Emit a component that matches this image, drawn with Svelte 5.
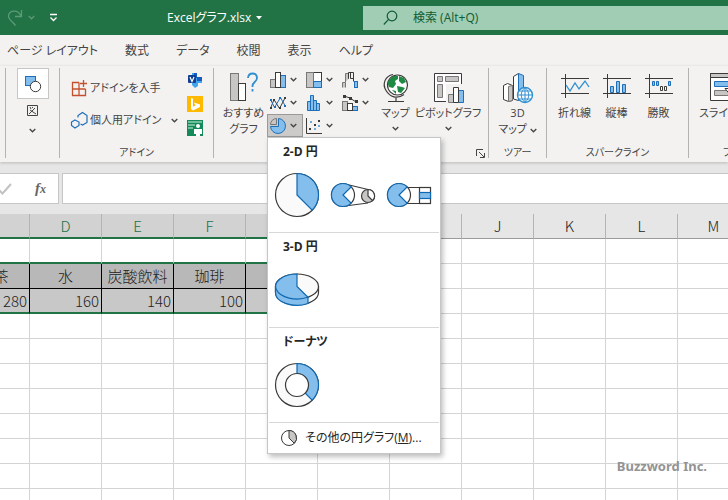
<script>
    const tabs = ["ページ レイアウト", "数式", "データ", "校閲", "表示", "ヘルプ"];
    const columns = "CDEFGHIJKLMNOPQRSTUVWXYZ".split("");
    const drinks = { C: ["お茶", 280], D: ["水", 160], E: ["炭酸飲料", 140], F: ["珈琲", 100], G: ["", ""] };
    const emptyRows = Array.from({ length: 40 }, (_, i) => i + 4);

    const smallCharts = [
        { kind: "column", label: "縦棒グラフ" },
        { kind: "tree", label: "階層構造グラフ" },
        { kind: "waterfall", label: "ウォーターフォール" },
        { kind: "line", label: "折れ線グラフ" },
        { kind: "histogram", label: "統計グラフ" },
        { kind: "combo", label: "複合グラフ" },
        { kind: "pie", label: "円グラフ" },
        { kind: "scatter", label: "散布図" }
    ];

    const sections = [
        { title: "2-D 円", items: ["pie2d", "pieOfPie", "barOfPie"] },
        { title: "3-D 円", items: ["pie3d"] },
        { title: "ドーナツ", items: ["donut"] }
    ];

    const sparklines = [
        { kind: "line", label: "折れ線" },
        { kind: "column", label: "縦棒" },
        { kind: "winloss", label: "勝敗" }
    ];

    let formula = $state("");
    let menuOpen = $state(true);
</script>

{#snippet chevron()}
    <svg class="chevron" width="7" height="5" viewBox="0 0 7 5"><path d="M.7 1 3.5 3.8 6.3 1" fill="none" stroke="currentColor" stroke-width="1.3" /></svg>
{/snippet}

{#snippet chartIcon(kind)}
    <svg width="18" height="18" viewBox="0 0 18 18" fill="none" stroke="#3b3a39">
        {#if kind === "column"}
            <rect x="1.5" y="8.5" width="5" height="8" fill="#c8c6c4" stroke="#797775" />
            <rect x="11.5" y="4.5" width="5" height="12" fill="#83beec" stroke="#1e6fb8" />
            <rect x="6.5" y="1.5" width="5" height="15" fill="#fff" />
        {:else if kind === "tree"}
            <rect x="1.5" y="1.5" width="15" height="15" fill="#fff" />
            <rect x="1.5" y="1.5" width="7" height="15" fill="#c8c6c4" stroke="#797775" />
            <rect x="8.5" y="10.5" width="8" height="6" fill="#83beec" stroke="#1e6fb8" />
        {:else if kind === "waterfall"}
            <path d="M1.5 16.500v-5h3v5M4.500 11V2.500h3V8" fill="#c8c6c4" stroke="#797775" />
            <path d="M7.500 7.500v-6h5v9M9.500 1.500v6h3" />
            <rect x="13.500" y="10.500" width="3" height="6" fill="#83beec" stroke="#1e6fb8" />
        {:else if kind === "line"}
            <path d="M1.500 14.500 5 5.500l5.500 9L16 4" />
            <path d="M1.500 5.500l4 8 6-10 5 9" stroke="#1e6fb8" />
            <path d="M1 13h2v2H1zM4 5h2v2H4zM10 13h2v2h-2zM15 3h2v2h-2z" fill="#3b3a39" stroke="none" />
            <path d="M1 5h2v2H1zM5 12h2v2H5zM10 3h2v2h-2zM15 11h2v2h-2z" fill="#1e6fb8" stroke="none" />
        {:else if kind === "histogram"}
            <path d="M2.5 16.5v-9h3v-6h3v5h3v3h3v7z" fill="#83beec" stroke="#1e6fb8" />
            <path d="M5.5 7v9M8.5 6v10M11.5 9v7" stroke="#1e6fb8" />
        {:else if kind === "combo"}
            <rect x="1.5" y="7.5" width="5" height="9" fill="#c8c6c4" stroke="#797775" />
            <rect x="11.5" y="12.5" width="5" height="4" fill="#83beec" stroke="#1e6fb8" />
            <rect x="6.5" y="9.5" width="5" height="7" fill="#fff" />
            <path d="M3 2l6 2 6 4" />
            <path d="M2 1h3v3H2zM8 3h3v3H8zM14 6h3v3h-3z" fill="#3b3a39" stroke="none" />
        {:else if kind === "pie"}
            <path d="M9.500 1.500v8h-8a7.500 7.500 0 1 0 8-8z" fill="#83beec" stroke="#1e6fb8" />
            <path d="M7.500 1.500v6h-6a6 6 0 0 1 6-6z" fill="#c8c6c4" stroke="#797775" />
        {:else}
            <path d="M1.5 1v15.5H17" />
            <path d="M4 11h2v2H4zM9 7h2v2H9zM13 3h2v2h-2z" fill="#3b3a39" stroke="none" />
            <path d="M5 4h2v2H5zM9 11h2v2H9zM13 8h2v2h-2z" fill="#6aaede" stroke="none" />
        {/if}
    </svg>
{/snippet}

{#snippet pieIcon(kind)}
    <svg width="46" height="46" viewBox="0 0 46 46" fill="none" stroke="#3b3a39" stroke-width="1.2">
        {#if kind === "pie2d"}
            <circle cx="23" cy="23" r="21.5" fill="#fafafa" />
            <path d="M23 1.500v21.500l15.200 15.200A21.500 21.500 0 0 0 23 1.500z" fill="#83beec" stroke="#1068b0" />
        {:else if kind === "pieOfPie"}
            <path d="M15 12l23 5.500M15 34l23-3" />
            <circle cx="13" cy="23" r="11.500" fill="#fff" />
            <path d="M21.100 14.900a11.500 11.500 0 1 0 0 16.200L13 23z" fill="#83beec" stroke="#1068b0" />
            <circle cx="38" cy="24" r="6.500" fill="#c8c6c4" />
            <path d="M38 24v-6.500A6.500 6.500 0 0 1 42.600 28.600z" fill="#fff" />
        {:else if kind === "barOfPie"}
            <path d="M18 15.500h16.500M18 31.500h16.500" />
            <circle cx="13" cy="23" r="11.500" fill="#fff" />
            <path d="M21.100 14.900a11.500 11.500 0 1 0 0 16.200L13 23z" fill="#83beec" stroke="#1068b0" />
            <rect x="33.500" y="15.500" width="11" height="16" fill="#fff" />
            <rect x="33.500" y="20.500" width="11" height="6" fill="#83beec" stroke="#1068b0" />
        {:else if kind === "pie3d"}
            <path d="M1.500 19.500v6a21.500 12.500 0 0 0 43 0v-6z" fill="#fff" />
            <ellipse cx="23" cy="19.500" rx="21.500" ry="12.500" fill="#fafafa" />
            <path d="M1.500 19.500v6A21.500 12.500 0 0 0 34 36.500v-6z" fill="#83beec" stroke="#1068b0" />
            <path d="M23 7A21.500 12.500 0 1 0 34 30.300L23 19.500z" fill="#83beec" stroke="#1068b0" />
        {:else}
            <circle cx="23" cy="23" r="21.500" fill="#fafafa" />
            <path d="M23 1.500A21.500 21.500 0 0 1 38.200 38.200L31 31a11.500 11.500 0 0 0-8-19.500z" fill="#83beec" stroke="#1068b0" />
            <circle cx="23" cy="23" r="11.500" fill="#fff" />
        {/if}
    </svg>
{/snippet}

<div class="app">
    <header class="titlebar">
        <div class="quick">
            <svg width="16" height="18" viewBox="0 0 16 18" fill="none" stroke="#5c9a78" stroke-width="1.3"><path d="M14.500 1v6.500H8M14 7C11 0 1 1 1.500 7.500 2 11 6 13 8.500 16.500" /></svg>
            <span class="faded">{@render chevron()}</span>
            <svg class="custom" width="9" height="9" viewBox="0 0 9 9" fill="none" stroke="#fff" stroke-width="1.300"><path d="M1 1.500h7M1.500 4.500l3 3 3-3" /></svg>
        </div>
        <button class="doc">Excelグラフ.xlsx <svg width="6" height="4" viewBox="0 0 6 4"><path d="M0 0h6L3 3.500z" fill="#fff" /></svg></button>
        <label class="search">
            <svg width="15" height="16" viewBox="0 0 15 16" fill="none" stroke="#0e5c33" stroke-width="1.200"><circle cx="9" cy="6" r="4.800" /><path d="M5.600 9.400.8 14.500" /></svg>
            <input type="search" placeholder="検索 (Alt+Q)" aria-label="検索" />
        </label>
    </header>

    <nav class="tabs">
        {#each tabs as tab}
            <button>{tab}</button>
        {/each}
    </nav>

    <section class="ribbon">
        <div class="group edge"></div>

        <div class="group shapes">
            <button class="shape-button" aria-label="図形">
                <svg width="18" height="18" viewBox="0 0 18 18"><rect x="1.500" y="1.500" width="10" height="9" fill="#83beec" stroke="#1e6fb8" /><circle cx="11.500" cy="11.500" r="5.200" fill="#fff" stroke="#3b3a39" /></svg>
            </button>
            <button class="figure" aria-label="図">
                <svg width="11" height="11" viewBox="0 0 11 11" fill="none" stroke="#444"><path d="M.5.500h10v10H.500zM2 9l6-6M3 5l6 4M3 2l1 2M5 2l1 1" /></svg>
                {@render chevron()}
            </button>
        </div>

        <div class="group addins">
            <div class="addin-body">
                <div class="addin-list">
                    <button>
                        <svg width="18" height="18" viewBox="0 0 18 18" fill="none" stroke="#c4512d" stroke-width="1.300"><path d="M9 3.500H2.500v13h13V10M2.500 10h13M9 3.500v13M13.500 1v7M10 4.500h7" /></svg>
                        アドインを入手
                    </button>
                    <button>
                        <svg width="18" height="18" viewBox="0 0 18 18" fill="none" stroke="#1e6fb8" stroke-width="1.200"><path d="M8 6.500V4.500l4.500-3L17 4.500v7l-4.500 2.500-2-1" /><path d="M5 9l4 2v3.500L5 17l-3.500-2.500V11z" /></svg>
                        <span>個人用アドイン</span>
                        {@render chevron()}
                    </button>
                </div>
                <div class="services">
                    <button aria-label="Visio">
                        <svg width="16" height="16" viewBox="0 0 16 16"><path d="M5 1h5v4h5v6h-4v3l-3 2-3-3z" fill="#41a5ee" /><path d="M7 1h3v5H7zM10 5h5v4h-5z" fill="#185abd" /><rect x="1" y="3" width="8" height="8" rx="1" fill="#103f91" /><path d="M3 5l2 4.500L7 5" fill="none" stroke="#fff" stroke-width="1.200" /></svg>
                    </button>
                    <button aria-label="Bing">
                        <svg width="16" height="16" viewBox="0 0 16 16"><path d="M0 0h16v16H0z" fill="#ffb900" /><path d="M4 2l2 .8v8L8.500 9.500 7 6.500l6 2v2.500L6 14.500 4 13z" fill="#fff" /></svg>
                    </button>
                    <button aria-label="People Graph">
                        <svg width="16" height="16" viewBox="0 0 16 16"><path d="M0 0h16v16H0z" fill="#148a5a" /><path d="M1 2h14M1 5h7M1 8h5" stroke="#8fd0b2" stroke-width="1.400" /><circle cx="11" cy="6" r="2" fill="#fff" /><path d="M7 9h8v5h-2v2H9v-2H7z" fill="#fff" /></svg>
                    </button>
                </div>
            </div>
            <div class="group-name">アドイン</div>
        </div>

        <div class="group charts">
            <button class="large recommended">
                <svg width="32" height="32" viewBox="0 0 32 32" fill="none" stroke="#3b3a39"><rect x="2.500" y="1.500" width="8" height="27" fill="#c8c6c4" stroke="#797775" /><rect x="10.500" y="11.500" width="7" height="17" fill="#fff" /><path d="M20 6c.5-6 9-6 9 0 0 4-4.500 4-4.500 8v1M24.500 17v2.500" stroke="#2f8fd0" stroke-width="1.800" /></svg>
                <span>おすすめ<br />グラフ</span>
            </button>
            <div class="small-charts">
                {#each smallCharts as chart}
                    {#if chart.kind === "pie"}
                        <div class="anchor">
                            <button class="small open" aria-label={chart.label} aria-expanded={menuOpen} onclick={() => (menuOpen = !menuOpen)}>
                                {@render chartIcon(chart.kind)}{@render chevron()}
                            </button>
                            {#if menuOpen}
                                <div class="menu">
                                    {#each sections as section}
                                        <div class="section">
                                            <h2>{section.title}</h2>
                                            <div class="gallery">
                                                {#each section.items as item}
                                                    <button aria-label={item}>{@render pieIcon(item)}</button>
                                                {/each}
                                            </div>
                                        </div>
                                    {/each}
                                    <button class="more">
                                        <svg width="18" height="18" viewBox="0 0 18 18" fill="#fff" stroke="#3b3a39"><circle cx="9" cy="9" r="7.500" /><path d="M9 1.500V9l5.300 5.300A7.500 7.500 0 0 0 9 1.500z" fill="#c8c6c4" /></svg>
                                        <span>その他の円グラフ(<u>M</u>)...</span>
                                    </button>
                                </div>
                            {/if}
                        </div>
                    {:else}
                        <button class="small" aria-label={chart.label}>
                            {@render chartIcon(chart.kind)}{@render chevron()}
                        </button>
                    {/if}
                {/each}
            </div>
            <button class="large map">
                <svg width="32" height="32" viewBox="0 0 32 32" fill="none" stroke="#3b3a39" stroke-width="1.200"><path d="M13 2.500C5 4 2 12 6 18.500s11 9 18 4M16 26v3M8 29.500h16" /><circle cx="17.500" cy="13" r="10" fill="#fff" /><path d="M9 8l4-4 5 0 0 3-3 2 1 3-3 4-4-1-1.500-4zM19 4l5 2 2 4-4 2-3-3zM17 14l5 1 3 1-4 5-3-1zM12 18l4 1v3z" fill="#1f8a43" stroke="none" /></svg>
                <span>マップ</span>
                {@render chevron()}
            </button>
            <button class="large pivot">
                <svg width="32" height="32" viewBox="0 0 32 32" fill="none" stroke="#3b3a39"><path d="M2.500 1.500h27v28h-27z" fill="#fff" /><path d="M5.500 4.500h5v5h-5zM13.500 4.500h13v5h-13zM5.500 12.500h5v13h-5z" fill="#c8c6c4" stroke="#797775" /><path d="M14 12h18v19H14z" fill="#f3f2f1" stroke="none" /><path d="M16.500 22.500h5v8h-5z" fill="#c8c6c4" stroke="#797775" /><path d="M26.500 18.500h5v12h-5z" fill="#83beec" stroke="#1e6fb8" /><path d="M21.500 15.500h5v15h-5z" fill="#fff" /></svg>
                <span>ピボットグラフ</span>
                {@render chevron()}
            </button>
            <button class="launcher" aria-label="グラフのオプション">
                <svg width="9" height="9" viewBox="0 0 9 9" fill="none" stroke="#444"><path d="M.5 7V.5H7M3 3l5 5M8.500 4v4.500H4" /></svg>
            </button>
        </div>

        <div class="group tour">
            <button class="large">
                <svg width="32" height="32" viewBox="0 0 32 32" fill="none" stroke="#3b3a39"><path d="M1.500 13.500l4-2 5 2v15l-4 1-5-2z" fill="#fff" /><path d="M6.500 14.500l4-1v15l-4 1z" fill="#c8c6c4" stroke="#797775" /><path d="M11.500 4.500l5-3v27l-5-1.500z" fill="#fff" /><path d="M16.500 1.500l5 2v25h-5z" fill="#83beec" stroke="#1e6fb8" /><circle cx="23" cy="23" r="7.500" fill="#fff" stroke="#2f8fd0" stroke-width="1.400" /><path d="M15.500 23h15M17 19h12M17 27h12M23 15.500v15M23 15.500c-5 5-5 10 0 15 5-5 5-10 0-15" stroke="#2f8fd0" /></svg>
                <span>3D<br />マップ {@render chevron()}</span>
            </button>
            <div class="group-name">ツアー</div>
        </div>

        <div class="group sparklines">
            <div class="spark-list">
                {#each sparklines as spark}
                    <button class="large">
                        <svg width="32" height="32" viewBox="0 0 32 32" fill="none" stroke="#3b3a39">
                            <path d="M2 6.500h28M2 21.500h28M6.500 2v24" />
                            {#if spark.kind === "line"}
                                <path d="M7 13l4 6 5-8 4 6 6-8 4 6" stroke="#2f8fd0" stroke-width="1.300" />
                            {:else if spark.kind === "column"}
                                <path d="M9.500 14.500h3v6h-3zM15.500 9.500h3v11h-3zM21.500 12.500h3v8h-3z" fill="#83beec" stroke="#1e6fb8" />
                            {:else}
                                <path d="M9.500 9.500h2v4h-2zM13.500 9.500h2v4h-2zM25.500 9.500h2v4h-2z" fill="#83beec" stroke="#1e6fb8" />
                                <path d="M17.500 14.500h2v4h-2zM21.500 14.500h2v4h-2z" fill="#fff" />
                            {/if}
                        </svg>
                        <span>{spark.label}</span>
                    </button>
                {/each}
            </div>
            <div class="group-name">スパークライン</div>
        </div>

        <div class="group filters">
            <button class="large">
                <svg width="32" height="32" viewBox="0 0 32 32" fill="none" stroke="#3b3a39"><path d="M2.500 1.500h27v27h-27z" fill="#fff" /><path d="M2.500 1.500h27v4h-27z" fill="#c8c6c4" /><path d="M6.500 9.500H27v5H6.500z" fill="#83beec" stroke="#1e6fb8" /><path d="M6.500 18.500H27v5H6.500z" fill="#c8c6c4" stroke="#797775" /><path d="M17 16.500h14l-5 6v7h-4v-7z" fill="#fff" /></svg>
                <span>スライサー</span>
            </button>
            <div class="group-name">フィルター</div>
        </div>
    </section>

    <div class="formula">
        <div class="formula-tools">
            <svg width="14" height="12" viewBox="0 0 14 12" fill="none" stroke="#c2c2c2" stroke-width="2"><path d="M1 7l3.500 3.500L13 1" /></svg>
            <button class="fx"><i>f</i><small>x</small></button>
        </div>
        <input class="formula-text" aria-label="数式バー" bind:value={formula} />
    </div>

    <main class="sheet">
        <table>
            <thead>
                <tr>
                    {#each columns as column}
                        <th class:selected={column in drinks}>{column}</th>
                    {/each}
                </tr>
            </thead>
            <tbody>
                <tr>
                    {#each columns as column}
                        <td class:above={column in drinks}></td>
                    {/each}
                </tr>
                <tr>
                    {#each columns as column}
                        <td class:name={column in drinks}>{drinks[column]?.[0] ?? ""}</td>
                    {/each}
                </tr>
                <tr>
                    {#each columns as column}
                        <td class:amount={column in drinks}>{drinks[column]?.[1] ?? ""}</td>
                    {/each}
                </tr>
                {#each emptyRows as row (row)}
                    <tr>
                        {#each columns as column}
                            <td></td>
                        {/each}
                    </tr>
                {/each}
            </tbody>
        </table>
        <div class="credit">Buzzword Inc.</div>
    </main>
</div>

<style>
    :global(body) {
        margin: 0;
    }
    .app {
        height: 100vh;
        display: flex;
        flex-direction: column;
        overflow: hidden;
        background: #e6e6e6;
        color: #444;
        font-family: "Open Sans", "Noto Sans CJK JP", sans-serif;
        font-size: 12px;
        line-height: 16px;
        font-feature-settings: "palt";
    }
    button,
    input {
        font: inherit;
        font-feature-settings: inherit;
        color: inherit;
        background: none;
        border: 0;
        padding: 0;
        margin: 0;
        outline: 0;
    }
    button {
        white-space: nowrap;
    }
    svg {
        flex: none;
    }
    .titlebar {
        flex: none;
        height: 35px;
        display: grid;
        grid-template-columns: 160px 196px 1fr;
        align-items: center;
        padding-left: 7px;
        background: #217346;
        color: #fff;
    }
    .quick {
        display: flex;
        align-items: center;
        gap: 5px;
    }
    .faded {
        display: flex;
        color: #5c9a78;
    }
    .custom {
        margin-left: 9px;
    }
    .doc {
        justify-self: start;
        display: flex;
        align-items: center;
        gap: 5px;
    }
    .search {
        height: 24px;
        display: flex;
        align-items: center;
        gap: 15px;
        padding-left: 20px;
        background: #a0cdb3;
        color: #0e5c33;
    }
    .search input {
        flex: 1;
        min-width: 0;
    }
    .search input::placeholder {
        color: #0e5c33;
        opacity: 1;
    }
    .tabs {
        flex: none;
        height: 31px;
        display: flex;
        align-items: center;
        gap: 27px;
        padding-left: 7px;
        background: #f3f2f1;
    }
    .ribbon {
        flex: none;
        height: 96px;
        display: flex;
        box-sizing: border-box;
        padding: 2px 0 4px;
        background: #f3f2f1;
        box-shadow: 0 1px 3px #bbb;
        position: relative;
        z-index: 1;
        font-size: 11px;
    }
    .group {
        flex: none;
        box-sizing: border-box;
        display: flex;
        flex-direction: column;
        border-right: 1px solid #b5b3b1;
    }
    .group-name {
        margin-top: auto;
        text-align: center;
        font-size: 10px;
        line-height: 12px;
        white-space: nowrap;
    }
    .edge {
        width: 6px;
    }
    .shapes {
        width: 54px;
        align-items: center;
        gap: 6px;
    }
    .shape-button {
        width: 32px;
        height: 31px;
        display: grid;
        place-items: center;
        background: #fff;
        border: 1px solid #c8c6c4;
    }
    .figure {
        display: flex;
        flex-direction: column;
        align-items: center;
        gap: 12px;
    }
    .addins {
        width: 154px;
    }
    .addin-body {
        display: flex;
        justify-content: space-between;
        padding: 4px 10px 0;
    }
    .addin-list {
        display: flex;
        flex-direction: column;
        gap: 14px;
        padding-top: 7px;
    }
    .addin-list button {
        display: flex;
        align-items: center;
        gap: 2px;
    }
    .addin-list .chevron {
        margin-left: 8px;
    }
    .services {
        display: flex;
        flex-direction: column;
        gap: 8px;
    }
    .services button {
        display: flex;
    }
    .charts {
        width: 275px;
        flex-direction: row;
        align-items: flex-start;
        padding-left: 6px;
    }
    .large {
        display: flex;
        flex-direction: column;
        align-items: center;
        gap: 1px;
        padding-top: 4px;
    }
    .large > .chevron {
        margin-top: 4px;
    }
    .recommended {
        width: 47px;
    }
    .map {
        width: 41px;
    }
    .pivot {
        width: 64px;
    }
    .small-charts {
        display: grid;
        grid-template-columns: repeat(3, 36px);
        grid-auto-rows: 23px;
    }
    .small {
        width: 36px;
        height: 23px;
        box-sizing: border-box;
        display: flex;
        align-items: center;
        justify-content: space-between;
        padding: 0 6px 0 2px;
    }
    .small.open {
        background: #cdcbc9;
        border: 1px solid #9b9997;
        padding: 0 5px 0 1px;
    }
    .launcher {
        align-self: flex-end;
        margin-left: -4px;
        display: flex;
    }
    .anchor {
        position: relative;
    }
    .menu {
        position: absolute;
        top: 100%;
        left: 0;
        width: 174px;
        box-sizing: border-box;
        background: #fff;
        border: 1px solid #c6c6c6;
        box-shadow: 2px 3px 5px rgba(0, 0, 0, 0.25);
        color: #262626;
        font-size: 12px;
    }
    .section {
        height: 95px;
        box-sizing: border-box;
        margin: 0 1px;
        padding-top: 6px;
        border-bottom: 1px solid #d8d8d8;
    }
    .section h2 {
        margin: 0;
        padding-left: 14px;
        font-size: 12px;
        line-height: 16px;
        font-weight: 700;
    }
    .gallery {
        display: flex;
        gap: 10px;
        padding: 12px 0 0 5px;
    }
    .gallery button {
        display: flex;
    }
    .more {
        width: 100%;
        height: 30px;
        display: flex;
        align-items: center;
        gap: 7px;
        padding-left: 12px;
    }
    .tour {
        width: 58px;
    }
    .sparklines {
        width: 142px;
    }
    .spark-list {
        display: flex;
        justify-content: center;
        padding-right: 2px;
    }
    .spark-list .large {
        width: 42px;
    }
    .filters {
        width: 112px;
        border-right: 0;
    }
    .filters .large {
        align-self: flex-start;
        padding-left: 10px;
    }
    .formula {
        flex: none;
        display: flex;
        gap: 3px;
        padding: 11px 0 10px;
    }
    .formula-tools,
    .formula-text {
        height: 31px;
        box-sizing: border-box;
        background: #fff;
        border: 1px solid #c6c6c6;
    }
    .formula-tools {
        width: 59px;
        display: flex;
        align-items: center;
        justify-content: space-between;
        border-left: 0;
        padding-right: 12px;
    }
    .formula-tools svg {
        margin-left: -2px;
    }
    .formula-text {
        flex: 1;
        min-width: 0;
        border-right: 0;
        padding: 0 6px;
    }
    .fx {
        font-family: "Liberation Serif", serif;
        font-size: 15px;
        font-weight: 700;
        font-style: italic;
        color: #666;
    }
    .fx small {
        font-size: 12px;
    }
    .sheet {
        flex: 1;
        min-height: 0;
        overflow: hidden;
        position: relative;
        font-family: "Noto Sans CJK JP", sans-serif;
        font-size: 15px;
        line-height: 20px;
        font-feature-settings: normal;
    }
    table {
        width: 1728px;
        table-layout: fixed;
        border-collapse: separate;
        border-spacing: 0;
        /* the sheet is scrolled part-way into column C */
        margin-left: -42px;
        background: #fff;
        color: #222;
    }
    th,
    td {
        height: 25px;
        box-sizing: border-box;
        padding: 0;
        border-right: 1px solid #d4d4d4;
        border-bottom: 1px solid #d4d4d4;
        font-weight: 300;
        white-space: nowrap;
    }
    th {
        background: #e6e6e6;
        border-color: #b4b4b4;
        border-bottom-color: #9b9b9b;
    }
    th.selected {
        background: #d2d2d2;
        border-bottom: 2px solid #217346;
        color: #217346;
    }
    td.above {
        border-bottom: 2px solid #217346;
    }
    td.name,
    td.amount {
        border-right-color: #000;
    }
    td.name {
        background: #b8b8b8;
        border-bottom-color: #000;
        text-align: center;
    }
    td.amount {
        background: #c8c8c8;
        border-bottom: 2px solid #217346;
        text-align: right;
        padding-right: 2px;
    }
    .credit {
        position: absolute;
        right: 21px;
        bottom: 24px;
        font-family: "Noto Sans", sans-serif;
        font-size: 13px;
        font-weight: 700;
        color: #939393;
    }
</style>
